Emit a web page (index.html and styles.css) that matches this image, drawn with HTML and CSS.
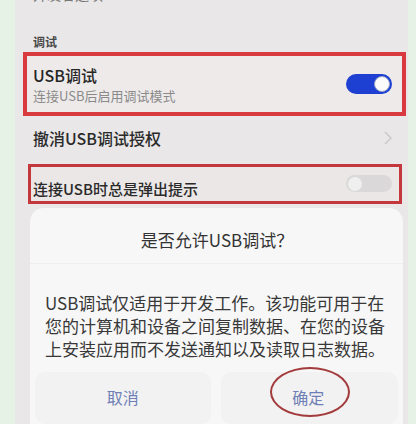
FILE: index.html
```html
<!DOCTYPE html>
<html lang="zh-CN">
<head>
<meta charset="utf-8">
<link rel="stylesheet" href="styles.css">
</head>
<body>
<div class="frame">
  <div class="screen">
    <div class="cut"><span>开发者选项</span></div>
    <div class="section">调试</div>
    <div class="box box-thick">
      <div class="texts">
        <div class="title">USB调试</div>
        <div class="sub">连接USB后启用调试模式</div>
      </div>
      <div class="toggle on"><span class="knob"></span></div>
    </div>
    <div class="row">
      <div class="label">撤消USB调试授权</div>
      <svg class="chev" width="8" height="14" viewBox="0 0 8 14"><polyline points="1,1 7,7 1,13" fill="none" stroke="#c9c9c9" stroke-width="1.4"/></svg>
    </div>
    <div class="box box-thin">
      <div class="label label2">连接USB时总是弹出提示</div>
      <div class="toggle off"><span class="knob"></span></div>
    </div>
    <div class="dialog">
      <div class="dtitle">是否允许USB调试？</div>
      <div class="sep"></div>
      <div class="dbody">USB调试仅适用于开发工作。该功能可用于在<br>您的计算机和设备之间复制数据、在您的设备<br>上安装应用而不发送通知以及读取日志数据。</div>
      <div class="buttons">
        <div class="btn">取消</div>
        <div class="btn ok">确定<span class="ring"></span></div>
      </div>
    </div>
  </div>
</div>
</body>
</html>
```
FILE: styles.css
```css
html, body {
  margin: 0;
  padding: 0;
}
body {
  width: 416px;
  height: 424px;
  overflow: hidden;
  background: #e7f2e7;
  font-family: "Noto Sans CJK SC", "Noto Sans", sans-serif;
  color: #2f2f2f;
}
.frame {
  display: flex;
  padding-left: 15px;
  height: 424px;
}
.screen {
  width: 393px;
  height: 424px;
  background: #e9e7e7;
  display: flex;
  flex-direction: column;
  overflow: hidden;
}
.cut {
  height: 4px;
  overflow: hidden;
  padding-left: 18px;
}
.cut span {
  display: block;
  font-size: 14px;
  line-height: 18px;
  margin-top: -15px;
  color: #777;
}
.section {
  margin-top: 30px;
  padding-left: 18px;
  font-size: 12px;
  font-weight: bold;
  line-height: 16px;
  color: #4a4a4a;
}
.box {
  display: flex;
  align-items: center;
  justify-content: space-between;
  box-sizing: border-box;
  background: #eeeaea;
}
.box-thick {
  margin-top: 2px;
  margin-left: 8px;
  width: 383px;
  height: 67px;
  border: 4px solid #d93a40;
  padding: 0 10px 0 6px;
}
.texts {
  display: flex;
  flex-direction: column;
  padding-top: 1px;
}
.title {
  font-size: 16px;
  line-height: 21px;
  font-weight: 500;
  color: #262626;
}
.sub {
  font-size: 13px;
  line-height: 17px;
  color: #8a8a8a;
  margin-top: 1px;
}
.toggle {
  position: relative;
  width: 46px;
  height: 20px;
  border-radius: 10px;
  box-sizing: border-box;
}
.toggle.on {
  background: #1d3fd2;
}
.toggle.off {
  background: #dad8d8;
  height: 17px;
}
.knob {
  position: absolute;
  top: 2px;
  width: 16px;
  height: 16px;
  border-radius: 50%;
  background: #fbfbfb;
  box-sizing: border-box;
}
.toggle.on .knob {
  right: 2px;
  border: 1px solid #9aa3c8;
}
.toggle.off .knob {
  left: 2px;
  top: 1.5px;
  width: 14px;
  height: 14px;
  background: #efefef;
}
.row {
  height: 50px;
  box-sizing: border-box;
  display: flex;
  align-items: center;
  justify-content: space-between;
  padding: 0 16px 3px 18px;
}
.label {
  font-size: 16px;
  font-weight: 500;
  color: #2a2a2a;
}
.box-thin {
  margin-left: 13px;
  width: 374px;
  height: 42px;
  border: 3px solid #c3373d;
  padding: 0 7px 0 2px;
  background: #ebe7e7;
}
.label2 {
  font-size: 15px;
  margin-top: 9px;
}
.dialog {
  margin-top: 4px;
  margin-left: 15px;
  width: 373px;
  flex: 1;
  background: #f7f7f7;
  border-radius: 14px 14px 0 0;
  display: flex;
  flex-direction: column;
}
.dtitle {
  margin-top: 20px;
  text-align: center;
  font-size: 17px;
  line-height: 24px;
  color: #333;
  padding-left: 1px;
}
.sep {
  margin-top: 11px;
  height: 1px;
  background: #eeeeee;
}
.dbody {
  margin-top: 27px;
  padding-left: 15px;
  font-size: 17px;
  line-height: 23px;
  color: #383838;
  white-space: nowrap;
}
.buttons {
  margin-top: 12px;
  display: flex;
  gap: 10px;
  padding: 0 5px;
}
.btn {
  position: relative;
  flex: 1;
  height: 50px;
  background: #f2f2f2;
  border-radius: 10px;
  display: flex;
  align-items: center;
  justify-content: center;
  font-size: 16px;
  color: #6f7fb6;
  padding-bottom: 2px;
}
.ok {
  padding-right: 2px;
}
.ring {
  position: absolute;
  left: 49px;
  top: -5px;
  width: 80px;
  height: 50px;
  border: 2px solid #a33a3c;
  border-radius: 50%;
  box-sizing: border-box;
}
```
